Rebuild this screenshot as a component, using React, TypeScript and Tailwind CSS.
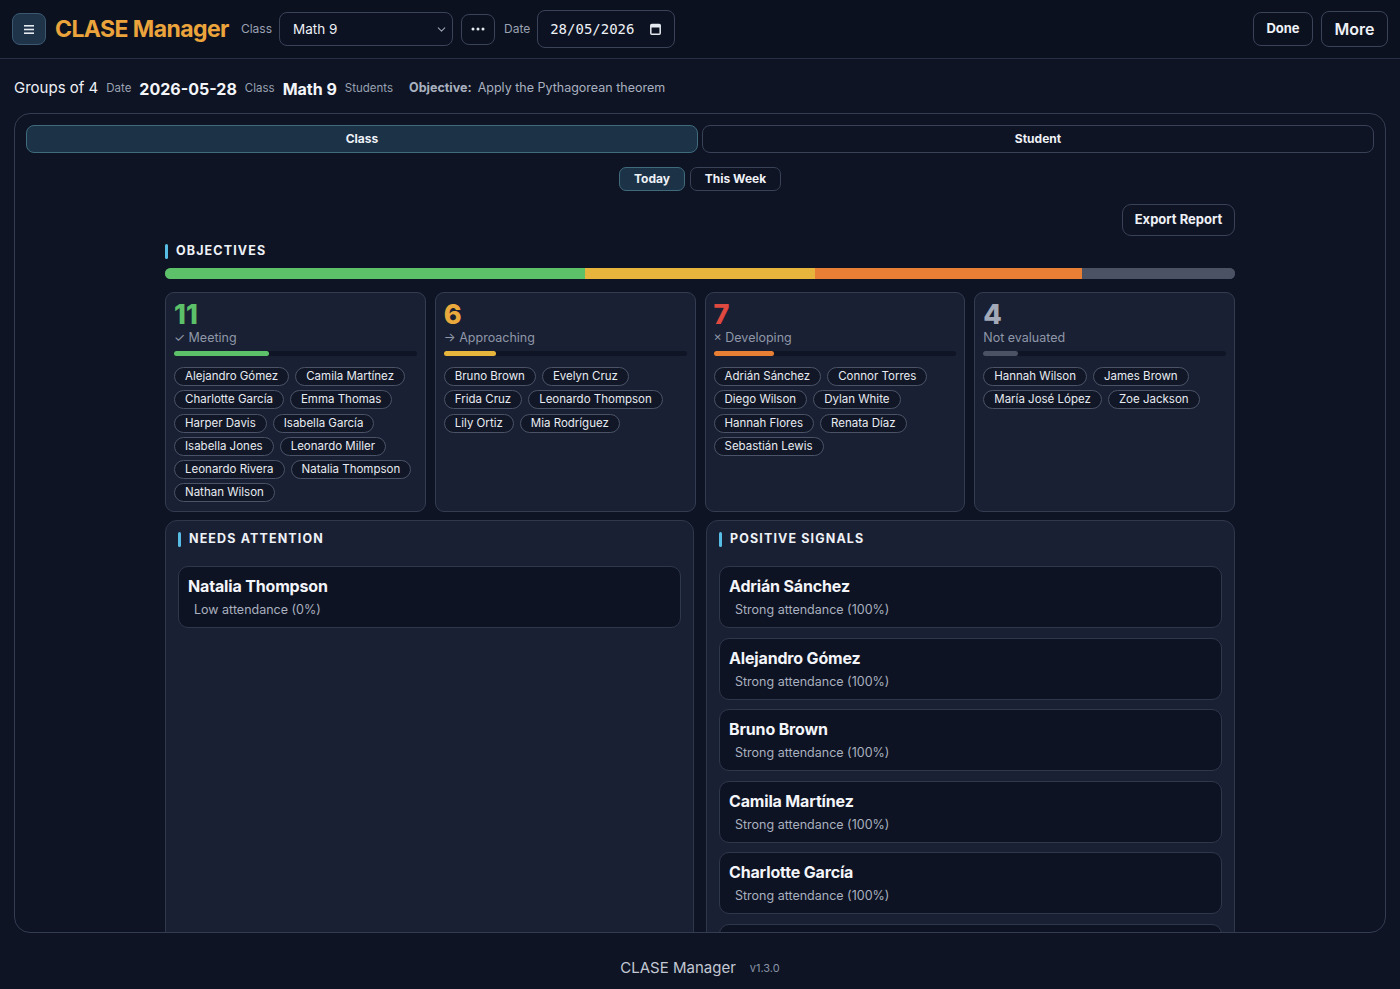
import React from 'react';
import { ChevronDown } from 'lucide-react';

type Bucket = {
  count: number;
  label: string;
  prefix: string;
  numClass: string;
  barClass: string;
  students: string[];
};

const TOTAL = 28;

const buckets: Bucket[] = [
  {
    count: 11,
    label: 'Meeting',
    prefix: '✓ ',
    numClass: 'text-[#5cc168]',
    barClass: 'bg-[#5cc168]',
    students: [
      'Alejandro Gómez', 'Camila Martínez', 'Charlotte García', 'Emma Thomas', 'Harper Davis',
      'Isabella García', 'Isabella Jones', 'Leonardo Miller', 'Leonardo Rivera', 'Natalia Thompson', 'Nathan Wilson'
    ]
  },
  {
    count: 6,
    label: 'Approaching',
    prefix: '→ ',
    numClass: 'text-[#e9a93c]',
    barClass: 'bg-[#e7b43c]',
    students: ['Bruno Brown', 'Evelyn Cruz', 'Frida Cruz', 'Leonardo Thompson', 'Lily Ortiz', 'Mia Rodríguez']
  },
  {
    count: 7,
    label: 'Developing',
    prefix: '× ',
    numClass: 'text-[#e0493f]',
    barClass: 'bg-[#e97f35]',
    students: ['Adrián Sánchez', 'Connor Torres', 'Diego Wilson', 'Dylan White', 'Hannah Flores', 'Renata Díaz', 'Sebastián Lewis']
  },
  {
    count: 4,
    label: 'Not evaluated',
    prefix: '',
    numClass: 'text-[#a2a9b8]',
    barClass: 'bg-[#4a5264]',
    students: ['Hannah Wilson', 'James Brown', 'María José López', 'Zoe Jackson']
  }
];

const positives = [
  'Adrián Sánchez', 'Alejandro Gómez', 'Bruno Brown', 'Camila Martínez', 'Charlotte García', 'Connor Torres'
];

function SectionTitle({ children }: { children: React.ReactNode }) {
  return (
    <div className="flex items-center gap-2 leading-[16px]">
      <span className="w-[3px] h-[15px] bg-[#58bde4] rounded-sm" />
      <span className="text-[12.5px] font-bold tracking-[0.09em] text-[#eef1f6] uppercase">{children}</span>
    </div>
  );
}

function SignalCard({ name, note }: { name: string; note: string }) {
  return (
    <div className="shrink-0 rounded-[10px] border border-[#2f374a] bg-[#0e1323] pl-[9px] pt-[8px] pb-[8px]">
      <div className="text-[16px] leading-[22px] font-bold tracking-[-0.01em] text-[#f3f5f9]">{name}</div>
      <div className="mt-[4px] pl-[6px] text-[12.5px] leading-[18px] text-[#a9b0bf]">{note}</div>
    </div>
  );
}

export default function App() {
  return (
    <div className="h-screen flex flex-col bg-[#0e1424] text-white overflow-hidden" style={{ fontFamily: 'Inter, "Noto Sans", sans-serif' }}>
      {/* Top bar */}
      <header className="h-[59px] shrink-0 flex items-center px-3 bg-[#0c1120] border-b border-[#273044]">
        <button type="button" className="w-[34px] h-[32px] rounded-[8px] bg-[#1f3449] border border-[#3b5870] flex items-center justify-center">
          <svg width="10" height="9" viewBox="0 0 10 9">
            <rect x="0" y="0" width="10" height="1.6" fill="#e5e9f0" />
            <rect x="0" y="3.7" width="10" height="1.6" fill="#e5e9f0" />
            <rect x="0" y="7.4" width="10" height="1.6" fill="#e5e9f0" />
          </svg>
        </button>
        <span className="ml-[9px] text-[23px] font-bold tracking-[-0.025em] text-[#eba43c]">CLASE Manager</span>
        <span className="ml-[12px] text-[12px] text-[#9aa2b2]">Class</span>
        <div className="ml-[7px] w-[174px] h-[34px] rounded-[8px] border border-[#3a4357] bg-[#0d1222] flex items-center justify-between pl-[13px] pr-[4px]">
          <span className="text-[13.5px] text-[#eef1f6]">Math 9</span>
          <ChevronDown size={13} className="text-[#9aa2b2]" />
        </div>
        <button type="button" className="ml-[8px] w-[34px] h-[31px] rounded-[8px] border border-[#3a4357] flex items-center justify-center">
          <svg width="14" height="4" viewBox="0 0 14 4">
            <circle cx="2" cy="2" r="1.5" fill="#e5e9f0" />
            <circle cx="7" cy="2" r="1.5" fill="#e5e9f0" />
            <circle cx="12" cy="2" r="1.5" fill="#e5e9f0" />
          </svg>
        </button>
        <span className="ml-[9px] text-[12px] text-[#9aa2b2]">Date</span>
        <div className="ml-[7px] w-[138px] h-[38px] rounded-[8px] border border-[#3a4357] bg-[#0d1222] flex items-center justify-between pl-[12px] pr-[13px]">
          <span className="text-[14px] text-[#eef1f6]" style={{ fontFamily: '"DejaVu Sans Mono", "Liberation Mono", monospace' }}>28/05/2026</span>
          <svg width="11" height="12" viewBox="0 0 11 12">
            <rect x="0.8" y="1.5" width="9.4" height="9.7" rx="1" fill="none" stroke="#e5e9f0" strokeWidth="1.5" />
            <rect x="0.8" y="1.5" width="9.4" height="3" fill="#e5e9f0" />
          </svg>
        </div>
        <div className="ml-auto flex items-center gap-2">
          <button type="button" className="h-[34px] w-[60px] rounded-[8px] border border-[#3a4357] text-[13px] font-bold text-[#eef1f6]">Done</button>
          <button type="button" className="h-[36px] w-[67px] rounded-[8px] border border-[#3a4357] text-[16px] font-semibold text-[#eef1f6]">More</button>
        </div>
      </header>

      {/* Session summary */}
      <div className="h-[54px] shrink-0 flex items-center pt-[5px] px-[14px] gap-[8px] whitespace-nowrap">
        <span className="text-[15px] text-[#eef1f6]">Groups of 4</span>
        <span className="text-[11.5px] text-[#9aa2b2]">Date</span>
        <span className="text-[16px] font-bold text-[#f3f5f9]">2026-05-28</span>
        <span className="text-[11.5px] text-[#9aa2b2]">Class</span>
        <span className="text-[16px] font-bold text-[#f3f5f9]">Math 9</span>
        <span className="text-[11.5px] text-[#9aa2b2]">Students</span>
        <span className="ml-[8px] text-[12.5px] font-bold text-[#a9b0bf]">Objective:</span>
        <span className="-ml-[2px] text-[12.5px] text-[#a9b0bf]">Apply the Pythagorean theorem</span>
      </div>

      {/* Main panel */}
      <main className="mx-[14px] h-[820px] shrink-0 rounded-[16px] border border-[#333c50] overflow-hidden p-[11px]">
        <div className="grid grid-cols-2 gap-1">
          <button type="button" className="h-[28px] rounded-[8px] bg-[#1c3247] border border-[#3f6b7c] text-[12px] font-bold text-[#eef1f6]">Class</button>
          <button type="button" className="h-[28px] rounded-[8px] border border-[#394256] text-[12px] font-bold text-[#eef1f6]">Student</button>
        </div>

        <div className="mt-[14px] flex justify-center gap-[5px]">
          <button type="button" className="h-[24px] w-[66px] rounded-[7px] bg-[#1c3247] border border-[#3f6b7c] text-[12px] font-bold text-[#eef1f6]">Today</button>
          <button type="button" className="h-[24px] w-[91px] rounded-[7px] border border-[#394256] text-[12px] font-bold text-[#eef1f6]">This Week</button>
        </div>

        <div className="w-[1070px] mx-auto">
          <div className="mt-[13px] flex justify-end">
            <button type="button" className="h-[32px] w-[113px] rounded-[9px] border border-[#394256] text-[13px] font-bold text-[#eef1f6]">Export Report</button>
          </div>

          <div className="mt-[7px]">
            <SectionTitle>Objectives</SectionTitle>
          </div>

          <div className="mt-[9px] h-[11px] rounded-full overflow-hidden flex bg-[#4a5264]">
            {buckets.map(b => (
              <div key={b.label} className={b.barClass} style={{ width: `${(b.count / TOTAL) * 100}%` }} />
            ))}
          </div>

          {/* Objective buckets */}
          <div className="mt-[13px] grid grid-cols-4 gap-[9px]">
            {buckets.map(b => (
              <div key={b.label} className="rounded-[9px] border border-[#333c50] bg-[#192033] p-2 pb-[9px]">
                <div className={`text-[27px] leading-[28px] font-extrabold ${b.numClass}`}>{b.count}</div>
                <div className="text-[12.5px] leading-[18px] text-[#8f97a8]">{b.prefix}{b.label}</div>
                <div className="mt-[4px] h-[5px] rounded-full bg-[#101525]">
                  <div className={`h-full rounded-full ${b.barClass}`} style={{ width: `${(b.count / TOTAL) * 100}%` }} />
                </div>
                <div className="mt-[11px] flex flex-wrap gap-x-[6px] gap-y-[4.3px]">
                  {b.students.map(s => (
                    <span key={s} className="h-[19px] px-[10px] rounded-full border border-[#4a5367] bg-[#111726] text-[11.5px] leading-[17px] text-[#e8ebf1] whitespace-nowrap">
                      {s}
                    </span>
                  ))}
                </div>
              </div>
            ))}
          </div>

          {/* Signals */}
          <div className="mt-[8px] grid grid-cols-2 gap-3 items-stretch">
            <section className="rounded-[12px] border border-[#2f374a] bg-[#1a2033] px-3 pt-[10px] pb-3">
              <SectionTitle>Needs Attention</SectionTitle>
              <div className="mt-[19px] flex flex-col gap-[9.5px]">
                <SignalCard name="Natalia Thompson" note="Low attendance (0%)" />
              </div>
            </section>
            <section className="rounded-[12px] border border-[#2f374a] bg-[#1a2033] px-3 pt-[10px] pb-3">
              <SectionTitle>Positive Signals</SectionTitle>
              <div className="mt-[19px] flex flex-col gap-[9.5px]">
                {positives.map(p => (
                  <SignalCard key={p} name={p} note="Strong attendance (100%)" />
                ))}
              </div>
            </section>
          </div>
        </div>
      </main>

      <footer className="flex-1 flex justify-center items-center gap-[14px] pt-[14px]">
        <span className="text-[15px] text-[#c3c8d3]">CLASE Manager</span>
        <span className="text-[11px] text-[#8a93a5]">v1.3.0</span>
      </footer>
    </div>
  );
}
